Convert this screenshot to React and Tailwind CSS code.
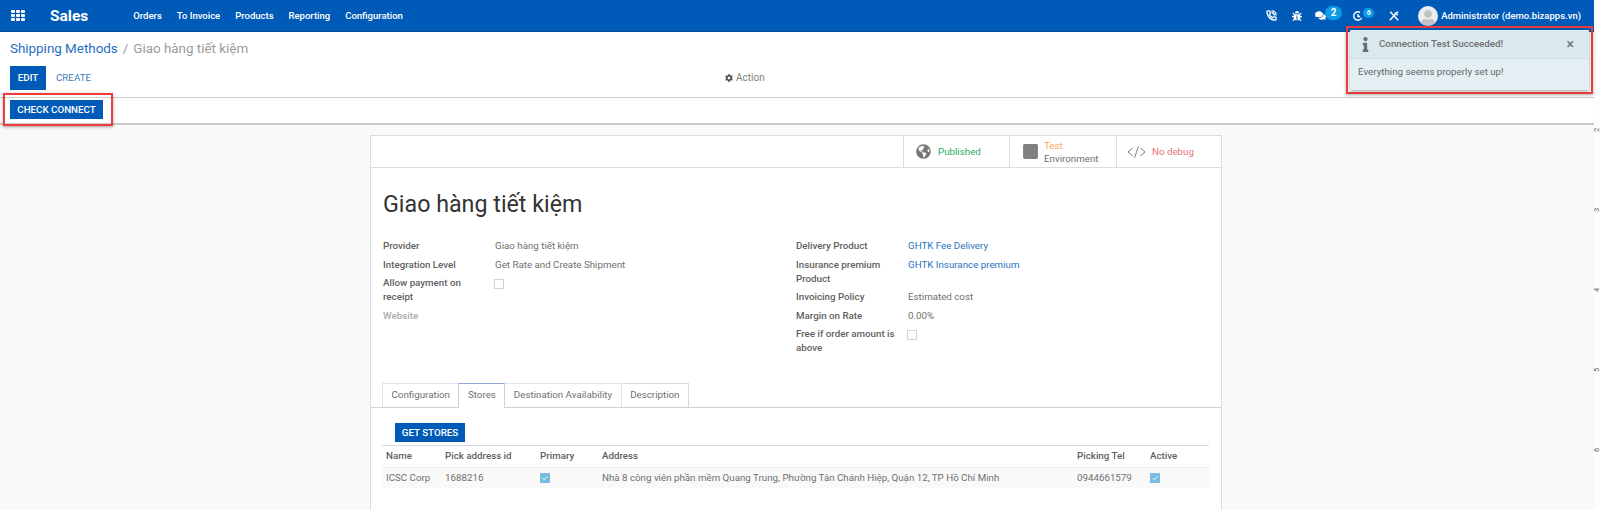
import React from "react";
import { FaBug, FaCog, FaComments, FaGlobeAmericas, FaInfo, FaSquare, FaUser } from "react-icons/fa";
import { PhoneCall } from "lucide-react";

const menus = ["Orders", "To Invoice", "Products", "Reporting", "Configuration"];
const columns = "grid grid-cols-[59px_95px_62px_475px_73px_1fr] items-center pl-[4px]";

function Row({ label, muted, children }) {
  return (
    <div className="grid grid-cols-[112px_1fr]">
      <div className={muted ? "font-medium text-[#aaa]" : "font-medium text-[#5f5f5f]"}>{label}</div>
      <div>{children}</div>
    </div>
  );
}

function EmptyBox() {
  return <span className="mt-[3px] -ml-px block h-[10px] w-[10px] border border-[#d4d4d4]" />;
}

function CheckedBox() {
  return (
    <span className="flex h-[10px] w-[10px] items-center justify-center border border-[#8fb4e4] bg-[#6fc0dc]">
      <svg viewBox="0 0 10 10" className="h-2 w-2" fill="none" stroke="#fff" strokeWidth="1.2">
        <path d="M2 5l2 2 4-4" />
      </svg>
    </span>
  );
}

export default function App() {
  return (
    <div className="flex h-[510px] w-[1600px] overflow-hidden bg-white font-[Roboto,sans-serif] text-[9.75px] leading-[14px] text-[#6f6f6f]">
      <div className="relative flex w-[1594px] flex-col">
        {/* top nav */}
        <nav className="flex h-8 shrink-0 items-center border-b border-[#004c9e] bg-[#005bb8] text-white">
          <div className="ml-[11px] grid h-[11px] w-[14px] grid-cols-3 gap-[1px]">
            {Array.from({ length: 9 }).map((_, i) => (
              <span key={i} className="rounded-[1px] bg-white" />
            ))}
          </div>
          <span className="ml-[25px] text-[15.5px] font-bold">Sales</span>
          <div className="ml-[45px] flex gap-[15px] text-[9.5px] font-medium">
            {menus.map((m) => (
              <span key={m}>{m}</span>
            ))}
          </div>
          <div className="ml-auto flex items-center">
            <PhoneCall className="h-[11px] w-[11px]" strokeWidth={3} />
            <FaBug className="ml-[15px] h-[10px] w-[10px]" />
            <FaComments className="ml-[13px] h-[11px] w-[11px]" />
            <span className="-mt-[6px] -ml-[1px] w-[17px] rounded-full bg-[#0d9be8] text-center text-[10px] leading-[14px] font-bold">2</span>
            <svg viewBox="0 0 12 12" className="ml-[11px] h-[10px] w-[10px]" fill="none" stroke="#fff" strokeWidth="1.7">
              <path d="M10.5 8A5 5 0 1 1 8.5 1.7M6 3.5V6.5H8.5" />
            </svg>
            <span className="-mt-[6px] w-[11px] rounded-full bg-[#0d9be8] text-center text-[7px] leading-[10px] font-bold">6</span>
            <svg viewBox="0 0 12 12" className="ml-[15px] h-[10px] w-[10px]" fill="none" stroke="#fff" strokeWidth="1.7">
              <path d="M1 11L8 3.5M6.5 2.5Q9 3 11 1M9 5L10.5 3.5M1.5 1L11 11" />
            </svg>
            <span className="ml-[19px] flex h-[20px] w-[20px] items-end justify-center overflow-hidden rounded-full bg-[#eee]">
              <FaUser className="h-[16px] w-[16px] text-[#c4c4c4]" />
            </span>
            <span className="mr-[13px] ml-[3px] text-[9.5px] font-medium">Administrator (demo.bizapps.vn)</span>
          </div>
        </nav>

        {/* control panel */}
        <div className="shrink-0 border-b border-[#ccc] px-[10px]">
          <div className="flex h-[34px] items-center text-[13.4px] text-[#9a9a9a]">
            <span className="text-[#1f6fc0]">Shipping Methods</span>
            <span className="mx-[5px]">/</span>
            <span>Giao hàng tiết kiệm</span>
          </div>
          <div className="mb-[7px] flex h-6 items-center">
            <button className="h-6 w-9 bg-[#005bb8] text-[9.75px] font-medium text-white">EDIT</button>
            <span className="ml-[10px] text-[9.75px] text-[#3f78bd]">CREATE</span>
            <span className="ml-[634px] flex items-center gap-[3px] text-[10px] text-[#808080]">
              <FaCog className="h-[8px] w-[8px] text-[#555]" />
              Action
            </span>
          </div>
        </div>
        <div className="h-[27px] shrink-0 border-b-2 border-[#ccc] px-[10px] pt-[2px]">
          <button className="h-[19px] w-[93px] bg-[#005bb8] text-[9.75px] font-medium text-white">CHECK CONNECT</button>
        </div>

        {/* form sheet */}
        <div className="flex-1 overflow-hidden bg-[#f9f9f9] pt-[10px]">
          <div className="ml-[370px] h-[420px] w-[852px] border border-[#dcdce4] bg-white">
            <div className="flex h-[32px] justify-end border-b border-[#dcdce4]">
              <div className="flex w-[106px] items-center border-l border-[#dcdce4] pl-[12px]">
                <FaGlobeAmericas className="h-[15px] w-[15px] text-[#777]" />
                <span className="mt-px ml-[7px] text-[#1fae5f]">Published</span>
              </div>
              <div className="flex w-[107px] items-center border-l border-[#dcdce4] pl-[12px]">
                <FaSquare className="h-[17px] w-[17px] text-[#808080]" />
                <span className="ml-[5px] leading-[13px]">
                  <span className="block text-[#f5a858]">Test</span>
                  Environment
                </span>
              </div>
              <div className="flex w-[105px] items-center border-l border-[#dcdce4] pl-[10px]">
                <svg viewBox="0 0 20 14" className="h-[14px] w-[19px]" fill="none" stroke="#777" strokeWidth="1">
                  <path d="M6 3L1 7l5 4M14 3l5 4-5 4M12 1L8 13" />
                </svg>
                <span className="ml-[6px] text-[#e57373]">No debug</span>
              </div>
            </div>

            <h1 className="mt-[19px] ml-[12px] text-[23.25px] leading-[34px] font-normal text-[#333]">Giao hàng tiết kiệm</h1>

            <div className="mt-[18px] ml-[12px] grid grid-cols-[413px_413px]">
              <div className="flex flex-col gap-y-[4.5px]">
                <Row label="Provider">Giao hàng tiết kiệm</Row>
                <Row label="Integration Level">Get Rate and Create Shipment</Row>
                <Row label={<>Allow payment on<br />receipt</>}>
                  <EmptyBox />
                </Row>
                <Row label="Website" muted />
              </div>
              <div className="flex flex-col gap-y-[4.5px]">
                <Row label="Delivery Product"><span className="text-[#2a73c0]">GHTK Fee Delivery</span></Row>
                <Row label={<>Insurance premium<br />Product</>}><span className="text-[#2a73c0]">GHTK Insurance premium</span></Row>
                <Row label="Invoicing Policy">Estimated cost</Row>
                <Row label="Margin on Rate">0.00%</Row>
                <Row label={<>Free if order amount is<br />above</>}>
                  <EmptyBox />
                </Row>
              </div>
            </div>

            {/* tabs */}
            <div className="mt-[28px] flex h-[25px] border-b border-[#d0d0dc] pl-[11px]">
              <div className="h-[24px] border-t border-l border-[#e4e4ea] px-[8.5px] leading-[22px]">Configuration</div>
              <div className="h-[25px] border-t border-r border-l border-[#d0d0dc] border-t-[#8aa8d0] bg-white px-[8.5px] leading-[22px]">Stores</div>
              <div className="h-[24px] border-t border-r border-[#e4e4ea] px-[8.5px] leading-[22px]">Destination Availability</div>
              <div className="h-[24px] border-t border-r border-[#d8d8e0] px-[8.5px] leading-[22px]">Description</div>
            </div>

            <div className="pl-[11px]">
              <button className="mt-[15px] ml-[13px] block h-[19px] w-[70px] bg-[#005bb8] text-[9.75px] font-medium text-white">GET STORES</button>
              <div className="mt-[3px] w-[827px] border-t border-[#d8d8e0]">
                <div className={`${columns} h-[22px] border-b border-[#eee] pb-[2px] font-medium text-[#5f5f5f]`}>
                  <span>Name</span>
                  <span>Pick address id</span>
                  <span>Primary</span>
                  <span>Address</span>
                  <span>Picking Tel</span>
                  <span>Active</span>
                </div>
                <div className={`${columns} h-[20px] bg-[#f9f9f9]`}>
                  <span>ICSC Corp</span>
                  <span>1688216</span>
                  <CheckedBox />
                  <span>Nhà 8 công viên phần mềm Quang Trung, Phường Tân Chánh Hiệp, Quận 12, TP Hồ Chí Minh</span>
                  <span>0944661579</span>
                  <CheckedBox />
                </div>
              </div>
            </div>
          </div>
        </div>

        {/* annotation boxes and toast lie over the page */}
        <div className="absolute top-[93px] left-[3px] h-[33px] w-[110px] border-2 border-[#ee3b3b] shadow-[0_1px_3px_rgba(0,0,0,0.35)]" />
        <div className="absolute top-[26px] left-[1346px] h-[68px] w-[247px] border-2 border-[#ee3b3b] p-[2px] shadow-[0_1px_3px_rgba(0,0,0,0.35)]">
          <div className="h-[60px] w-[239px] bg-[#e4eff4] shadow-[0_1px_3px_rgba(0,0,0,0.4)]">
            <div className="flex h-[29px] items-center border-b border-[#cfe0e6] bg-[#d9e9ee] pr-[15px] pl-[8px] font-medium text-[#707070]">
              <FaInfo className="h-[15px] w-[15px] text-[#6b6f72]" />
              <span className="ml-[6px]">Connection Test Succeeded!</span>
              <span className="ml-auto text-[14px] leading-none">×</span>
            </div>
            <div className="flex h-[26px] items-center pl-[8px] text-[#666]">Everything seems properly set up!</div>
          </div>
        </div>
      </div>

      {/* page edge with a cut-off ruler */}
      <div className="flex flex-1 flex-col bg-[#fdfdfe] pt-[90px] text-[7.5px] leading-[6px] text-[#666]">
        {["2", "3", "4", "5", "6"].map((n) => (
          <div key={n} className="flex h-[80px] items-center justify-center">
            <span className="inline-block -rotate-90">{n}</span>
          </div>
        ))}
      </div>
    </div>
  );
}
